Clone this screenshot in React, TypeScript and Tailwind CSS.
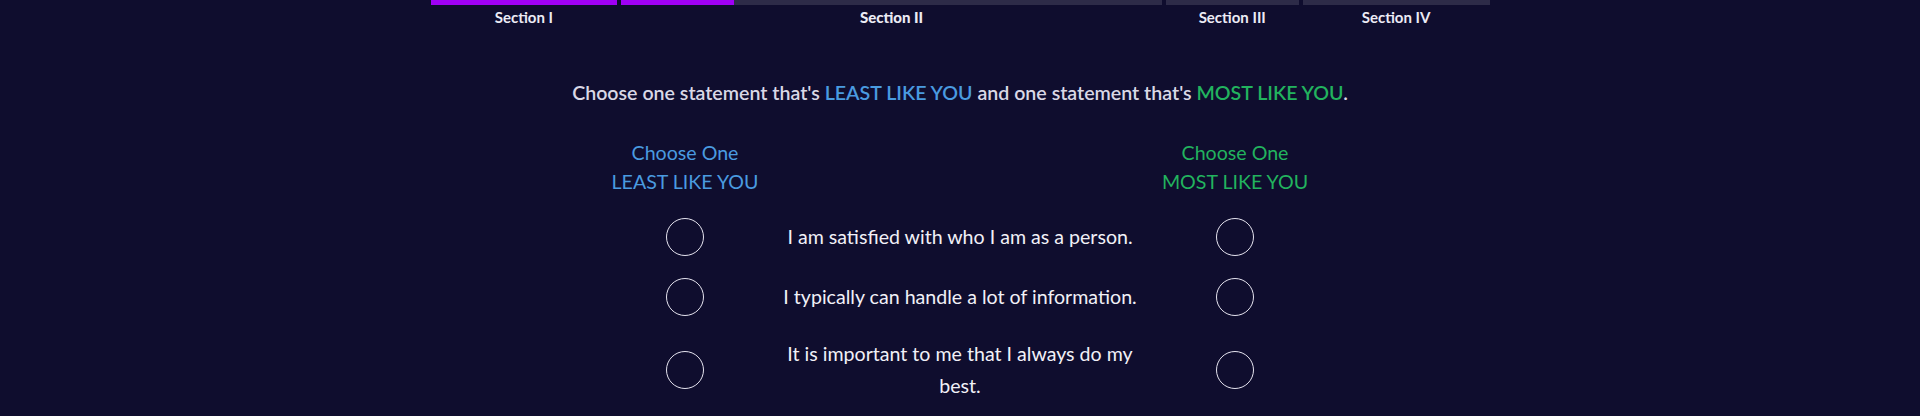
import { useState } from 'react';

const sections = [
  { label: 'Section I', width: 'w-[187px]', fill: 'w-full', current: false },
  { label: 'Section II', width: 'w-[541px]', fill: 'w-[113px]', current: true },
  { label: 'Section III', width: 'w-[133px]', fill: 'w-0', current: false },
  { label: 'Section IV', width: 'w-[187px]', fill: 'w-0', current: false },
];

const statements = [
  'I am satisfied with who I am as a person.',
  'I typically can handle a lot of information.',
  'It is important to me that I always do my best.',
];

function Radio({ checked, onClick }: { checked: boolean; onClick: () => void }) {
  return (
    <button
      onClick={onClick}
      className="h-[38px] w-[38px] rounded-full border border-[#e6e4f0] flex items-center justify-center"
    >
      {checked && <span className="h-[24px] w-[24px] rounded-full bg-white" />}
    </button>
  );
}

export default function App() {
  const [least, setLeast] = useState<number | null>(null);
  const [most, setMost] = useState<number | null>(null);

  return (
    <div className="min-h-screen bg-[#0f0d2e] text-white font-['Lato',sans-serif]">
      <div className="mx-auto w-[1059px]">
        <div className="flex gap-[4px]">
          {sections.map((s) => (
            <div key={s.label} className={`${s.width} flex flex-col items-center`}>
              <div className="h-[5px] w-full bg-[#2d2b48]">
                <div className={`h-full ${s.fill} bg-[#a000f5]`} />
              </div>
              <span
                className={`mt-[2px] text-[15px] leading-[20px] ${
                  s.current ? 'font-black' : 'font-bold'
                } text-[#ecebf5]`}
              >
                {s.label}
              </span>
            </div>
          ))}
        </div>
      </div>

      <p className="mt-[52px] text-center text-[19.6px] leading-[28px] font-semibold text-[#d9d8e6]">
        Choose one statement that's <span className="text-[#4a9be0]">LEAST LIKE YOU</span> and one
        statement that's <span className="text-[#22b35e]">MOST LIKE YOU</span>.
      </p>

      <div className="mx-auto mt-[31px] w-[734px]">
        <div className="grid grid-cols-[184px_366px_184px] text-center text-[19.6px] leading-[29px]">
          <div className="text-[#4a9be0]">
            <div>Choose One</div>
            <div>LEAST LIKE YOU</div>
          </div>
          <div />
          <div className="text-[#22b35e]">
            <div>Choose One</div>
            <div>MOST LIKE YOU</div>
          </div>
        </div>

        <div className="mt-[11px] flex flex-col">
          {statements.map((text, i) => (
            <div key={i} className="grid grid-cols-[184px_366px_184px] items-center py-[11px]">
              <div className="flex justify-center">
                <Radio checked={least === i} onClick={() => setLeast(i)} />
              </div>
              <div className="text-center text-[19.6px] leading-[32px] text-[#f1f0f7]">{text}</div>
              <div className="flex justify-center">
                <Radio checked={most === i} onClick={() => setMost(i)} />
              </div>
            </div>
          ))}
        </div>
      </div>
    </div>
  );
}
